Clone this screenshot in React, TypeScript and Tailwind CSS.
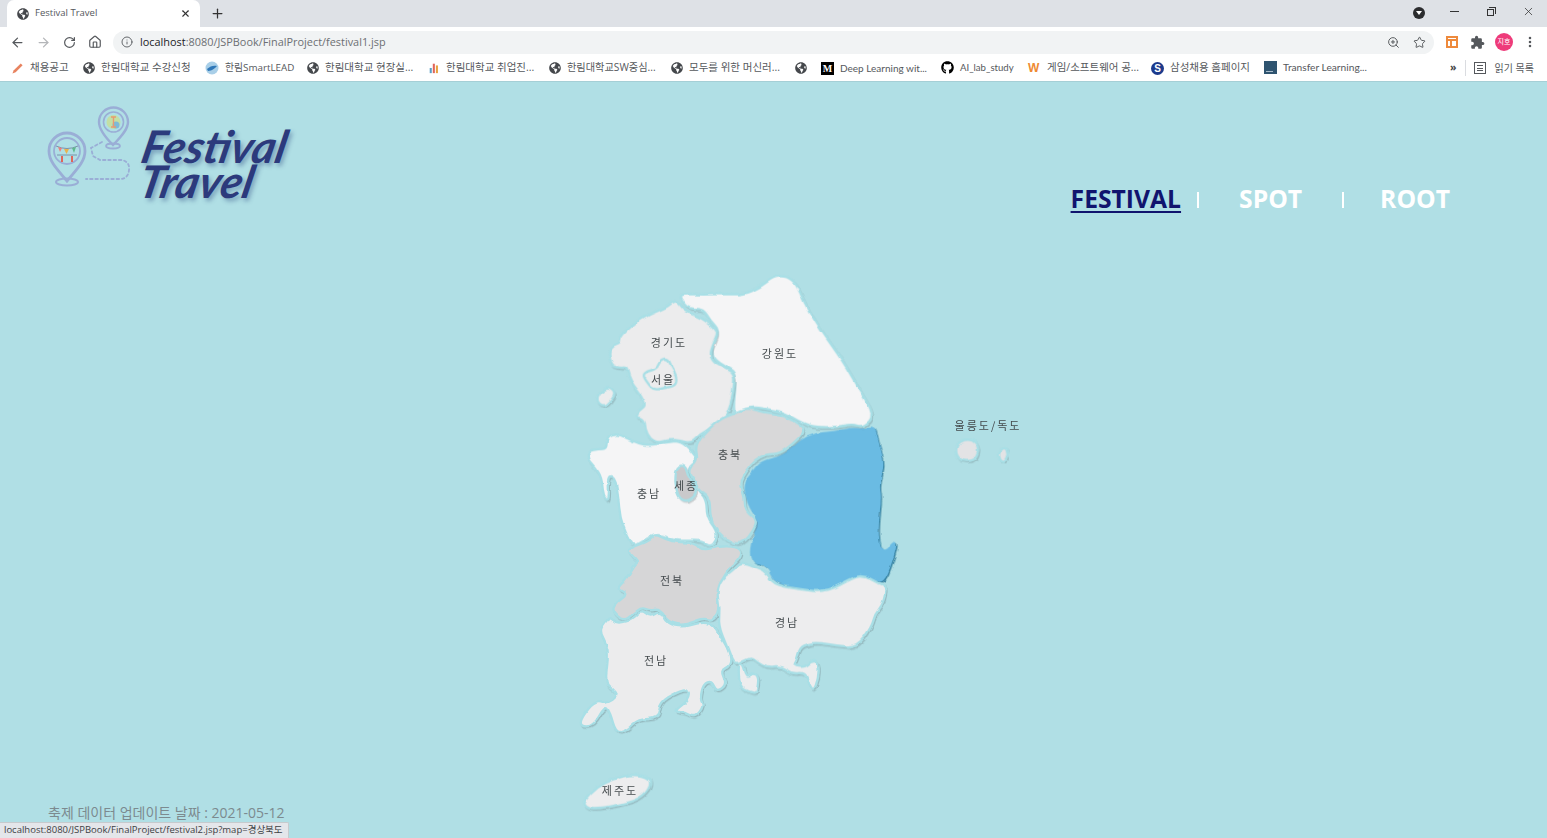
import React from "react";
import { ArrowLeft, ArrowRight, House, Info, MoreVertical, Plus, RotateCw, Star, X, ZoomIn } from "lucide-react";
import { FaGithub, FaGlobeAmericas } from "react-icons/fa";
import { MdExtension } from "react-icons/md";

type Pt = [number, number];

// map coordinates are 3x page pixels, measured from the map's top left corner
const smooth = (pts: Pt[]) => {
  const mid = (a: Pt, b: Pt) => [(a[0] + b[0]) / 2, (a[1] + b[1]) / 2];
  const start = mid(pts[pts.length - 1], pts[0]);
  let d = `M${start[0]} ${start[1]}`;
  pts.forEach((p, i) => {
    const m = mid(p, pts[(i + 1) % pts.length]);
    d += ` Q${p[0]} ${p[1]} ${m[0]} ${m[1]}`;
  });
  return d + "Z";
};

const regions: { fill: string; pts: Pt[] }[] = [
  {
    fill: "#f5f5f6",
    pts: [[330,95],[345,90],[400,92],[460,90],[520,92],[570,70],[610,38],[650,36],[680,60],[700,110],[740,180],[790,250],[830,310],[870,380],[915,455],[880,490],[850,480],[800,490],[740,490],[700,480],[640,445],[590,435],[540,428],[510,450],[488,450],[500,330],[470,310],[430,285],[425,250],[450,200],[420,170],[400,135],[360,135],[340,115]],
  },
  {
    fill: "#ececed",
    pts: [[318,106],[340,135],[360,148],[400,165],[425,185],[445,205],[430,240],[420,270],[430,295],[460,310],[495,330],[490,380],[480,430],[465,465],[430,490],[390,510],[365,538],[330,530],[300,527],[265,537],[240,525],[225,495],[225,470],[198,458],[205,440],[228,425],[215,395],[190,365],[175,335],[170,310],[150,312],[125,305],[115,265],[130,245],[150,240],[150,220],[190,180],[240,150],[290,130]],
  },
  {
    fill: "#ececed",
    pts: [[75,405],[110,367],[137,385],[125,410],[100,430]],
  },
  {
    fill: "#f5f5f6",
    pts: [[110,520],[145,508],[185,530],[230,545],[290,535],[330,530],[365,560],[385,590],[350,615],[375,670],[410,705],[410,760],[440,800],[440,830],[420,850],[395,830],[350,830],[310,830],[265,808],[220,830],[190,848],[170,815],[150,760],[145,700],[135,640],[115,640],[118,712],[100,700],[95,640],[75,610],[52,585],[55,560],[85,555],[110,555]],
  },
  {
    fill: "#d8d8d9",
    pts: [[375,550],[400,510],[450,465],[490,450],[530,430],[580,445],[630,450],[670,470],[708,497],[680,530],[630,570],[590,570],[555,590],[530,620],[510,655],[525,700],[525,740],[562,770],[550,800],[520,838],[480,838],[440,800],[420,760],[420,700],[385,680],[375,650],[350,615],[385,590]],
  },
  {
    fill: "#c9c9cb",
    pts: [[320,608],[345,603],[355,640],[370,665],[382,690],[350,714],[325,700],[314,650]],
  },
  {
    fill: "#d6d6d7",
    pts: [[255,810],[285,825],[320,835],[365,835],[400,860],[450,845],[512,850],[515,880],[470,920],[445,975],[447,1040],[430,1070],[400,1062],[370,1075],[330,1085],[290,1070],[270,1035],[240,1040],[215,1030],[190,1050],[160,1072],[125,1040],[140,1015],[175,990],[138,975],[165,950],[195,900],[205,895],[168,860],[200,845],[240,830]],
  },
  {
    fill: "#ececed",
    pts: [[120,1058],[140,1080],[190,1065],[215,1035],[240,1060],[270,1040],[290,1080],[340,1090],[390,1075],[430,1080],[450,1115],[480,1165],[482,1205],[450,1220],[472,1260],[440,1285],[425,1250],[400,1260],[390,1305],[402,1325],[375,1362],[345,1345],[310,1343],[355,1310],[358,1275],[320,1285],[270,1315],[265,1365],[205,1365],[170,1400],[138,1408],[120,1345],[105,1325],[70,1387],[30,1387],[35,1360],[75,1310],[110,1320],[145,1295],[130,1275],[105,1260],[115,1175],[110,1140],[88,1100],[105,1075]],
  },
  {
    fill: "#ededee",
    pts: [[515,895],[555,910],[590,925],[610,960],[680,975],[770,985],[850,940],[885,935],[920,955],[950,965],[940,1020],[915,1050],[905,1090],[860,1150],[800,1145],[740,1135],[715,1140],[690,1150],[680,1190],[670,1205],[705,1210],[725,1190],[747,1195],[745,1245],[730,1282],[715,1255],[705,1225],[665,1230],[630,1205],[595,1210],[565,1195],[545,1178],[518,1190],[505,1198],[488,1195],[470,1145],[445,1085],[450,1035],[440,985],[455,945],[490,920]],
  },
  {
    fill: "#ededee",
    pts: [[505,1200],[520,1198],[530,1240],[550,1225],[567,1240],[560,1287],[540,1285],[508,1268]],
  },
  {
    fill: "#ededee",
    pts: [[42,1610],[80,1570],[130,1545],[190,1530],[238,1540],[242,1570],[210,1605],[140,1625],[70,1635],[45,1625]],
  },
  {
    fill: "#e3e3e5",
    pts: [[1160,540],[1185,525],[1215,530],[1228,560],[1210,590],[1175,592],[1157,570]],
  },
  {
    fill: "#e3e3e5",
    pts: [[1285,565],[1305,548],[1315,570],[1305,596],[1290,590]],
  },
];

const gyeongbuk: Pt[] = [[914,483],[925,530],[945,600],[928,660],[935,700],[925,790],[930,850],[950,860],[965,835],[982,832],[975,870],[947,950],[920,955],[880,935],[855,945],[770,987],[680,975],[610,955],[590,905],[550,900],[535,860],[565,770],[530,720],[520,655],[550,620],[575,590],[640,575],[710,510],[800,500],[850,490],[880,495]];

const seoul: Pt[] = [[270,290],[295,285],[305,310],[320,335],[318,365],[285,372],[250,378],[235,360],[218,335],[230,322],[260,315]];

const labels = [
  { text: "경기도", x: 99, y: 79 },
  { text: "강원도", x: 210, y: 90 },
  { text: "서울", x: 93, y: 116 },
  { text: "충북", x: 160, y: 191 },
  { text: "세종", x: 116, y: 222 },
  { text: "충남", x: 79, y: 230 },
  { text: "전북", x: 102, y: 317 },
  { text: "경남", x: 217, y: 359 },
  { text: "전남", x: 86, y: 397 },
  { text: "제주도", x: 50, y: 527 },
  { text: "울릉도/독도", x: 418, y: 162 },
];

const Globe = () => <FaGlobeAmericas className="size-[12px] shrink-0 text-[#45484c]" />;

const bookmarks: { icon: React.ReactNode; text?: string; w?: string }[] = [
  {
    icon: (
      <svg viewBox="0 0 14 14" className="size-[13px] shrink-0">
        <path d="M1.5 12.5 L3 9 L10.5 1.5 L12.5 3.5 L5 11 Z" fill="#e8835f" />
      </svg>
    ),
    text: "채용공고",
    w: "w-[39px]",
  },
  { icon: <Globe />, text: "한림대학교 수강신청", w: "w-[90px]" },
  {
    icon: (
      <svg viewBox="0 0 14 14" className="size-[14px] shrink-0">
        <circle cx="7" cy="7" r="6.5" fill="#a9cfe8" />
        <path d="M2 8 C5 5 9 4 12 5 C10 7 7 10 3 10 Z" fill="#2f77b8" />
      </svg>
    ),
    text: "한림SmartLEAD",
    w: "w-[68px] text-[9.8px]",
  },
  { icon: <Globe />, text: "한림대학교 현장실...", w: "w-[89px]" },
  {
    icon: (
      <svg viewBox="0 0 14 14" className="size-[12px] shrink-0">
        <rect x="2" y="7" width="2.4" height="6" fill="#5aa0c8" />
        <rect x="5.6" y="2" width="2.4" height="11" fill="#e0655a" />
        <rect x="9.2" y="4" width="2.4" height="9" fill="#e9a23f" />
      </svg>
    ),
    text: "한림대학교 취업진...",
    w: "w-[89px]",
  },
  { icon: <Globe />, text: "한림대학교SW중심...", w: "w-[90px] text-[10.2px]" },
  { icon: <Globe />, text: "모두를 위한 머신러...", w: "w-[92px]" },
  { icon: <Globe /> },
  {
    icon: (
      <span className="flex size-[13px] shrink-0 items-center justify-center bg-black font-['Liberation_Serif',serif] text-[10px] font-bold text-white">
        M
      </span>
    ),
    text: "Deep Learning wit...",
    w: "w-[87px] font-['Lato',sans-serif] text-[10px]",
  },
  { icon: <FaGithub className="size-[13px] shrink-0 text-black" />, text: "AI_lab_study", w: "w-[54px] font-['Lato',sans-serif] text-[9.6px]" },
  {
    icon: <span className="w-[13px] shrink-0 font-['Liberation_Sans',sans-serif] text-[12px] font-bold text-[#ee8a33]">W</span>,
    text: "게임/소프트웨어 공...",
    w: "w-[90px]",
  },
  {
    icon: (
      <span className="flex size-[13px] shrink-0 items-center justify-center rounded-full bg-[#1c3a8c] font-['Liberation_Sans',sans-serif] text-[10px] font-bold text-white">
        S
      </span>
    ),
    text: "삼성채용 홈페이지",
    w: "w-[80px]",
  },
  {
    icon: (
      <span className="flex h-[13px] w-[13px] shrink-0 items-end bg-[#2f5470]">
        <span className="mb-[2px] ml-[2px] h-px w-[7px] bg-[#a9bccb]" />
      </span>
    ),
    text: "Transfer Learning...",
    w: "w-[84px] font-['Lato',sans-serif] text-[10.2px]",
  },
];

const LogoPins = () => (
  <svg viewBox="0 0 90 90" className="h-[90px] w-[90px] shrink-0" fill="none">
    <g stroke="#9aaed6" strokeLinecap="round">
      <path d="M58 40 L47 46 L49 54 L56 58 H78 Q86 60 85 68 Q84 77 76 77 H42" strokeWidth="1.8" strokeDasharray="2.5 2.8" />
      <path d="M69 43 C58 32 55 26 55 20 A14.5 14.5 0 1 1 84 20 C84 26 80 32 69 43 Z" strokeWidth="2.4" />
      <ellipse cx="69" cy="44" rx="7" ry="2.5" strokeWidth="1.8" />
      <circle cx="69.5" cy="20" r="10" strokeWidth="1.6" />
      <path d="M23 79 C10 64 5 58 5 49 A18 18 0 1 1 41 49 C41 58 36 64 23 79 Z" strokeWidth="2.8" />
      <ellipse cx="23" cy="80" rx="11" ry="3.5" strokeWidth="2" />
      <circle cx="23" cy="49" r="13" strokeWidth="1.8" />
    </g>
    <circle cx="69.5" cy="20" r="7" fill="#c3dfa5" />
    <circle cx="72" cy="23" r="3.5" fill="#7db9d8" />
    <path d="M67 15 H72 M69.5 15 V25 M67 25 H72" stroke="#e89a70" strokeWidth="1.4" />
    <path d="M12 44 Q23 49 34 44" stroke="#6f7f9c" strokeWidth=".8" />
    <path d="M14 45 L16 50 L18 46 Z" fill="#ec7f7f" />
    <path d="M20 47 L22.500 52 L25 47 Z" fill="#e8b34f" />
    <path d="M28 46 L30 51 L32 45 Z" fill="#60b98f" />
    <path d="M13 53 H33" stroke="#6f7f9c" strokeWidth=".8" />
    <path d="M18 54 V60 M28 54 V60" stroke="#e0655a" strokeWidth="2" />
  </svg>
);

const App = () => {
  return (
    <div className="flex h-[838px] w-[1547px] flex-col overflow-hidden bg-[#b0dfe5] font-['Open_Sans','Noto_Sans_CJK_KR',sans-serif]">
      {/* tab strip */}
      <div className="flex h-[27px] shrink-0 items-end bg-[#dee1e6] pl-[7px] text-[#45484c]">
        <div className="flex h-[27px] w-[193px] items-center rounded-t-[7px] bg-white pl-[10px] pr-[9px]">
          <Globe />
          <span className="ml-[6px] flex-1 text-[9.5px] text-[#55585c]">Festival Travel</span>
          <X size={11} strokeWidth={2.4} className="text-[#333]" />
        </div>
        <Plus size={15} strokeWidth={2} className="mb-[6px] ml-[10px] text-[#333]" />
        <div className="mb-[7px] ml-auto flex items-center">
          <span className="flex size-[12px] items-center justify-center rounded-full bg-[#2b2c2e]">
            <span className="mt-px h-0 w-0 border-x-[3px] border-t-[4px] border-x-transparent border-t-white" />
          </span>
          <span className="ml-[25px] mb-[2px] h-px w-[9px] bg-[#333]" />
          <span className="relative mb-[2px] ml-[28px] size-[9px]">
            <span className="absolute bottom-0 left-0 size-[7px] border border-[#333]" />
            <span className="absolute right-0 top-0 size-[7px] border-r border-t border-[#333]" />
          </span>
          <X size={13} strokeWidth={1.4} className="mb-[2px] ml-[26px] mr-[12px] text-[#333]" />
        </div>
      </div>

      {/* address bar */}
      <div className="flex h-[28px] shrink-0 items-center bg-white pl-[10px] pt-[2px] text-[#55585c]">
        <ArrowLeft size={15} strokeWidth={2} />
        <ArrowRight size={15} strokeWidth={2} className="ml-[11px] text-[#b4b6b9]" />
        <RotateCw size={13} strokeWidth={2.2} className="ml-[12px]" />
        <House size={14} strokeWidth={2} className="ml-[12px]" />
        <div className="ml-[11px] flex h-[23px] w-[1321px] items-center rounded-full bg-[#f1f3f4] pl-[8px] pr-[8px]">
          <Info size={12} strokeWidth={1.8} />
          <span className="ml-[7px] flex-1 text-[10.9px] text-[#6c6f73]">
            <span className="text-[#202124]">localhost</span>:8080/JSPBook/FinalProject/festival1.jsp
          </span>
          <ZoomIn size={13} strokeWidth={1.8} />
          <Star size={13} strokeWidth={1.8} className="ml-[13px]" />
        </div>
        <span className="ml-[12px] flex size-[12px] flex-col border-2 border-[#ee8a3c]">
          <span className="h-[3px] border-b-2 border-[#ee8a3c]" />
          <span className="ml-[2px] flex-1 border-l-2 border-[#ee8a3c]" />
        </span>
        <MdExtension size={15} className="ml-[12px]" />
        <span className="ml-[10px] flex size-[18px] items-center justify-center rounded-full bg-[#ee3b7a] text-[7px] text-white">지호</span>
        <MoreVertical size={14} strokeWidth={2.4} className="ml-[10px]" />
      </div>

      {/* bookmarks */}
      <div className="flex h-[27px] shrink-0 items-center gap-[14px] border-b border-[#a5cfd6] bg-white pl-[11px] text-[10.5px] text-[#55585c]">
        {bookmarks.map((b, i) => (
          <div key={i} className="flex items-center gap-[6px] whitespace-nowrap">
            {b.icon}
            {b.text && <span className={b.w}>{b.text}</span>}
          </div>
        ))}
        <span className="ml-[69px] font-bold text-[#444]">»</span>
        <span className="-ml-[5px] h-[16px] w-px bg-[#dadce0]" />
        <div className="-ml-[6px] flex items-center gap-[8px]">
          <span className="flex size-[12px] flex-col justify-evenly border border-[#55585c] px-[2px]">
            <span className="h-px bg-[#55585c]" />
            <span className="h-px bg-[#55585c]" />
            <span className="h-px bg-[#55585c]" />
          </span>
          <span className="text-[10px]">읽기 목록</span>
        </div>
      </div>

      {/* page header */}
      <div className="flex h-[182px] shrink-0 justify-between pl-[44px] pr-[97px]">
        <div className="flex items-start pt-[20px]">
          <LogoPins />
          <div className="mt-[27px] ml-[5px] -skew-x-12 font-['Lato',sans-serif] text-[45px] leading-[35px] font-bold italic text-[#2c3a7c] [text-shadow:3px_3px_4px_rgba(60,90,140,0.45)]">
            <div>Festival</div>
            <div className="ml-[5px]">Travel</div>
          </div>
        </div>
        <nav className="flex items-start pt-[97px] text-[24.7px] leading-[40px] font-bold text-white">
          <a className="text-[#10146e] underline decoration-2 underline-offset-[3px]">FESTIVAL</a>
          <span className="ml-[16px] mt-[13px] h-[16px] w-[2px] bg-white" />
          <a className="ml-[40px]">SPOT</a>
          <span className="ml-[40px] mt-[13px] h-[16px] w-[2px] bg-white" />
          <a className="ml-[36px]">ROOT</a>
        </nav>
      </div>

      {/* map and footer */}
      <div className="flex min-h-0 flex-1">
        <div className="w-[570px] shrink-0 pl-[48px] pt-[539px] text-[14px] leading-[20px] text-[#7c8a8f]">
          축제 데이터 업데이트 날짜 : 2021-05-12
        </div>
        <svg viewBox="0 0 460 573" className="h-[573px] w-[460px] shrink-0">
          <defs>
            <filter id="landShadow" x="-10%" y="-10%" width="120%" height="120%">
              <feDropShadow dx="3" dy="4" stdDeviation="2" floodColor="#5d6b70" floodOpacity="0.3" />
            </filter>
            <filter id="selectedShadow" x="-10%" y="-10%" width="120%" height="120%">
              <feDropShadow dx="3" dy="3" stdDeviation="1" floodColor="#1f6d8c" floodOpacity="0.95" />
            </filter>
            {/* roughens the coast so it doesn't look vector-clean */}
            <filter id="rough" x="-5%" y="-5%" width="110%" height="110%">
              <feTurbulence type="fractalNoise" baseFrequency="0.03" numOctaves="2" seed="4" />
              <feDisplacementMap in="SourceGraphic" scale="11" xChannelSelector="R" yChannelSelector="G" />
            </filter>
          </defs>
          <g transform="scale(0.33333)" filter="url(#rough)">
            <path d={smooth(gyeongbuk)} fill="#6abbe3" filter="url(#selectedShadow)" />
            {regions.map((r, i) => (
              <path key={i} d={smooth(r.pts)} fill={r.fill} stroke="#a8dfe6" strokeWidth="7" filter="url(#landShadow)" />
            ))}
            <path d={smooth(seoul)} fill="#ececed" stroke="#a8dfe6" strokeWidth="7" />
          </g>
          {labels.map((l) => (
            <text key={l.text} x={l.x} y={l.y + 4} textAnchor="middle" fontSize="11" letterSpacing="2" fill="#444a4d" fontFamily="'Noto Sans CJK KR', sans-serif">
              {l.text}
            </text>
          ))}
        </svg>
      </div>

      {/* link status bubble */}
      <div className="absolute bottom-0 left-0 flex h-[16px] w-[289px] items-center rounded-tr-[2px] border-r border-t border-[#c6cacd] bg-[#e4e6ea] pl-[4px] text-[9.5px] whitespace-nowrap text-[#3c4043]">
        localhost:8080/JSPBook/FinalProject/festival2.jsp?map=경상북도
      </div>
    </div>
  );
};

export default App;
